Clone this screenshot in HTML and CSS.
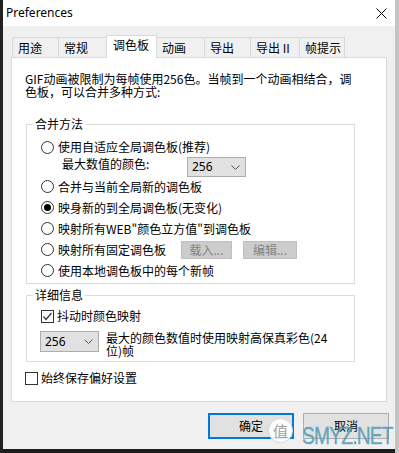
FILE: index.html
```html
<!DOCTYPE html>
<html lang="zh-CN">
<head>
<meta charset="utf-8">
<title>Preferences</title>
<link rel="stylesheet" href="styles.css">
</head>
<body>
<div class="desk-left"></div>
<div class="window">
  <div class="titlebar">
    <span class="title">Preferences</span>
    <svg class="close" width="11" height="11" viewBox="0 0 11 11"><path d="M0.5 0.5 L10.5 10.5 M10.5 0.5 L0.5 10.5" stroke="#000" stroke-width="1" fill="none"/></svg>
  </div>
  <div class="client">
    <div class="tabs">
      <div class="tab">用途</div>
      <div class="tab">常规</div>
      <div class="tab tab-active">调色板</div>
      <div class="tab">动画</div>
      <div class="tab">导出</div>
      <div class="tab">导出 II</div>
      <div class="tab">帧提示</div>
    </div>
    <div class="panel">
      <p class="intro"><span class="line">GIF动画被限制为每帧使用256色。当帧到一个动画相结合，调</span><span class="line">色板，可以合并多种方式:</span></p>
      <fieldset class="group group-merge">
        <legend>合并方法</legend>
        <div class="rows rows-merge">
          <div class="opt opt-first"><span class="radio"></span><span class="lbl">使用自适应全局调色板(推荐)</span></div>
          <div class="sub">
            <span class="sublabel">最大数值的颜色:</span>
            <div class="combo"><span class="combo-val">256</span><svg class="chev" width="9" height="5" viewBox="0 0 9 5"><polyline points="0.5,0.5 4.5,4.5 8.5,0.5" fill="none" stroke="#555" stroke-width="1"/></svg></div>
          </div>
          <div class="opt"><span class="radio"></span><span class="lbl">合并与当前全局新的调色板</span></div>
          <div class="opt"><span class="radio radio-on"></span><span class="lbl">映身新的到全局调色板(无变化)</span></div>
          <div class="opt"><span class="radio"></span><span class="lbl">映射所有WEB"颜色立方值"到调色板</span></div>
          <div class="opt"><span class="radio"></span><span class="lbl">映射所有固定调色板</span><span class="btn-dis btn-load">载入...</span><span class="btn-dis btn-edit">编辑...</span></div>
          <div class="opt"><span class="radio"></span><span class="lbl">使用本地调色板中的每个新帧</span></div>
        </div>
      </fieldset>
      <fieldset class="group group-detail">
        <legend>详细信息</legend>
        <div class="rows rows-detail">
          <div class="chk-row"><span class="check"><svg width="11" height="11" viewBox="0 0 11 11"><polyline points="1.5,5.5 4,8.5 9.5,2" fill="none" stroke="#333" stroke-width="1.2"/></svg></span><span class="lbl-chk">抖动时颜色映射</span></div>
          <div class="combo-row">
            <div class="combo combo-b"><span class="combo-val">256</span><svg class="chev" width="9" height="5" viewBox="0 0 9 5"><polyline points="0.5,0.5 4.5,4.5 8.5,0.5" fill="none" stroke="#555" stroke-width="1"/></svg></div>
            <span class="combo-text"><span class="line">最大的颜色数值时使用映射高保真彩色(24</span><span class="line">位)帧</span></span>
          </div>
        </div>
      </fieldset>
      <div class="chk-row chk-save"><span class="check"></span><span class="lbl-chk">始终保存偏好设置</span></div>
    </div>
    <div class="buttons">
      <div class="btn btn-default">确定</div>
      <div class="btn">取消</div>
    </div>
  </div>
</div>
<div class="desk-right"></div>
<div class="watermark">
  <span class="wm-circle">值</span>
  <span class="wm-text">SMYZ.NET</span>
</div>
</body>
</html>
```
FILE: styles.css
```css
html, body {
  margin: 0;
  padding: 0;
}
body {
  width: 399px;
  height: 453px;
  overflow: hidden;
  display: flex;
  background: #1c1c1c;
  position: relative;
  font-family: "Noto Sans CJK SC", "Noto Sans", sans-serif;
  font-size: 12px;
  color: #000;
}
.desk-left {
  width: 3px;
  flex: none;
  background: #222;
}
.desk-right {
  width: 4px;
  flex: none;
  background: #c4c4c4;
}
.window {
  width: 392px;
  height: 449px;
  flex: none;
  display: flex;
  flex-direction: column;
  background: #f0f0f0;
}
.titlebar {
  height: 26px;
  flex: none;
  background: #fff;
  display: flex;
  align-items: center;
  justify-content: space-between;
  padding: 0 8px 0 3px;
}
.title {
  font-family: "Noto Sans", "Liberation Sans", sans-serif;
  font-size: 12px;
  line-height: 14px;
}
.close {
  display: block;
  margin-top: 1px;
}
.client {
  flex: 1;
  display: flex;
  flex-direction: column;
  padding-top: 9px;
}
.tabs {
  display: grid;
  grid-template-columns: 47px 48px 50px 48px 46px 49px 45px;
  align-items: end;
  height: 22px;
  margin-left: 9px;
  position: relative;
  z-index: 1;
}
.tab {
  height: 20px;
  box-sizing: border-box;
  border-top: 1px solid #d9d9d9;
  border-right: 1px solid #d9d9d9;
  background: #f0f0f0;
  padding-left: 5px;
  line-height: 19px;
  font-size: 12px;
  white-space: nowrap;
}
.tab:first-child {
  border-left: 1px solid #d9d9d9;
}
.tab-active {
  height: 23px;
  margin-bottom: -1px;
  margin-left: -1px;
  border-left: 1px solid #d9d9d9;
  background: #fff;
  padding-left: 6px;
  line-height: 18px;
}
.panel {
  margin-left: 8px;
  width: 376px;
  height: 345px;
  box-sizing: border-box;
  border: 1px solid #d9d9d9;
  background: #fff;
  padding: 14px 0 0 13px;
}
.intro {
  margin: 0;
  white-space: nowrap;
  display: flex;
  flex-direction: column;
}
.line {
  display: block;
  height: 13px;
  line-height: 13px;
  overflow: visible;
}
.group {
  margin: 19px 0 0 1px;
  width: 329px;
  box-sizing: border-box;
  padding: 0;
  border: 1px solid #dcdcdc;
}
.group legend {
  margin-left: 6px;
  padding: 0 2px;
  line-height: 14px;
  font-size: 12px;
}
.group-detail {
  margin-top: 4px;
}
.rows {
  display: flex;
  flex-direction: column;
  padding-left: 14px;
}
.rows-merge {
  padding-top: 6px;
  padding-bottom: 2px;
}
.rows-detail {
  padding-top: 4px;
  padding-bottom: 4px;
}
.opt {
  height: 21px;
  display: flex;
  align-items: center;
  white-space: nowrap;
}
.opt-first {
  height: 20px;
}
.radio {
  width: 13px;
  height: 13px;
  box-sizing: border-box;
  border: 1px solid #333;
  border-radius: 50%;
  background: #fff;
  flex: none;
  margin-right: 4px;
  display: flex;
  align-items: center;
  justify-content: center;
}
.radio-on::after {
  content: "";
  width: 7px;
  height: 7px;
  border-radius: 50%;
  background: #000;
}
.lbl {
  line-height: 14px;
}
.sub {
  height: 19px;
  display: flex;
  align-items: flex-start;
  padding-left: 21px;
}
.sublabel {
  width: 125px;
  line-height: 14px;
  white-space: nowrap;
}
.combo {
  width: 59px;
  height: 20px;
  box-sizing: border-box;
  border: 1px solid #adadad;
  background: #e1e1e1;
  display: flex;
  align-items: center;
  justify-content: space-between;
  padding: 0 5px 0 4px;
  flex: none;
}
.combo-val {
  font-family: "Noto Sans", "Liberation Sans", sans-serif;
  font-size: 12px;
  line-height: 14px;
}
.chev {
  display: block;
}
.btn-dis {
  height: 18px;
  box-sizing: border-box;
  border: 1px solid #bfbfbf;
  background: #cccccc;
  color: #838383;
  line-height: 16px;
  text-align: center;
  flex: none;
}
.btn-load {
  width: 51px;
  margin-left: 15px;
}
.btn-edit {
  width: 54px;
  margin-left: 11px;
}
.chk-row {
  height: 20px;
  display: flex;
  align-items: center;
  white-space: nowrap;
}
.check {
  width: 13px;
  height: 13px;
  box-sizing: border-box;
  border: 1px solid #333;
  background: #fff;
  flex: none;
  margin-right: 3px;
  display: flex;
  align-items: center;
  justify-content: center;
}
.check svg {
  display: block;
}
.lbl-chk {
  line-height: 14px;
}
.combo-row {
  margin-top: 5px;
  height: 26px;
  display: flex;
  align-items: flex-start;
  margin-left: -1px;
}
.combo-b {
  height: 21px;
}
.combo-text {
  margin-left: 7px;
  white-space: nowrap;
  display: flex;
  flex-direction: column;
}
.chk-save {
  margin-top: 6px;
}
.buttons {
  margin-top: 11px;
  display: flex;
  justify-content: flex-end;
  gap: 9px;
  padding-right: 6px;
}
.btn {
  width: 86px;
  height: 26px;
  box-sizing: border-box;
  border: 1px solid #adadad;
  background: #e1e1e1;
  display: flex;
  align-items: center;
  justify-content: center;
  line-height: 14px;
}
.btn-default {
  border: 2px solid #0078d7;
}
.watermark {
  position: absolute;
  left: 268px;
  top: 412px;
  display: flex;
  align-items: center;
  gap: 12px;
  pointer-events: none;
}
.wm-circle {
  width: 23px;
  height: 23px;
  border-radius: 50%;
  background: rgba(255, 255, 255, 0.9);
  border: 1px solid #d8d8d8;
  color: #a0a0a0;
  font-size: 15px;
  line-height: 23px;
  text-align: center;
}
.wm-text {
  font-family: "Liberation Sans", sans-serif;
  font-size: 24px;
  line-height: 24px;
  margin-top: 12px;
  margin-left: -3px;
  color: rgba(80, 155, 185, 0.85);
  letter-spacing: -1px;
  display: inline-block;
  transform: scaleX(0.8);
  transform-origin: left center;
  -webkit-text-stroke: 0.4px rgba(80, 155, 185, 0.85);
}
```
